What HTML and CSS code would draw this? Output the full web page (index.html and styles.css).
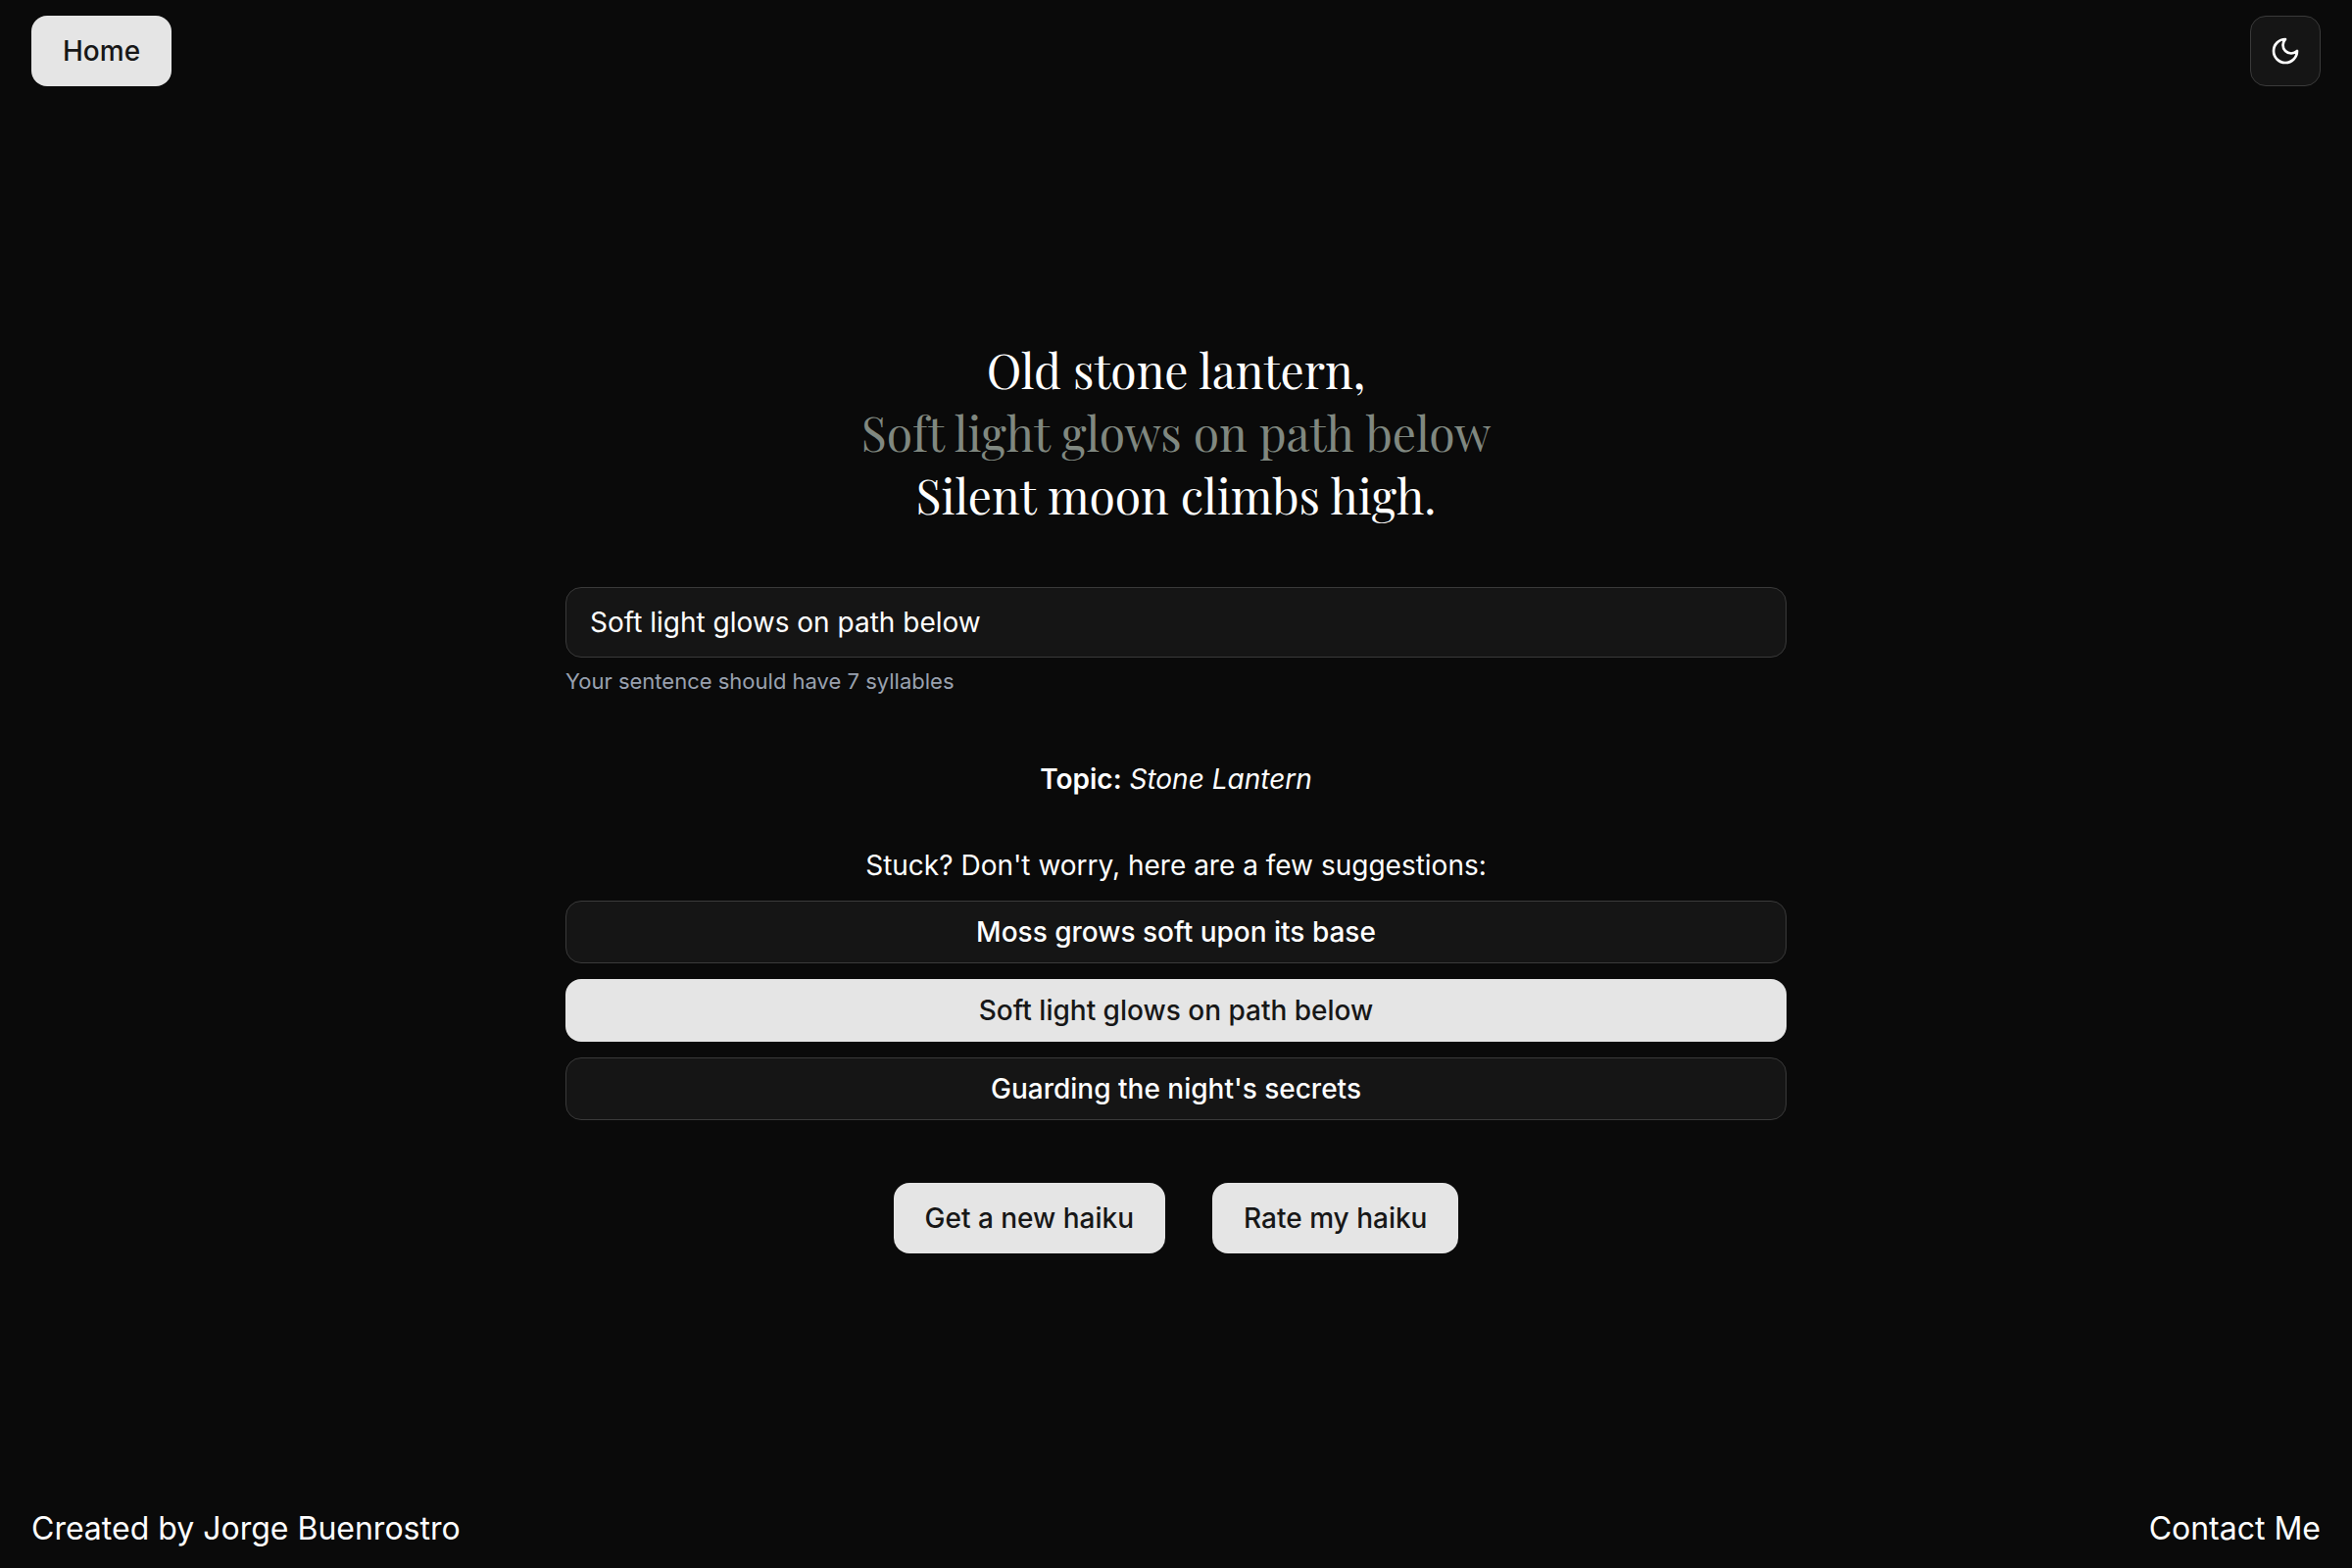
FILE: index.html
```html
<!DOCTYPE html>
<html lang="en">
<head>
  <meta charset="utf-8">
  <meta name="viewport" content="width=device-width, initial-scale=1">
  <title>Haiku</title>
  <link rel="stylesheet" href="styles.css">
</head>
<body>
  <header class="topbar">
    <a class="button" href="/">Home</a>
    <button class="button button-outline button-icon" type="button" aria-label="Toggle theme">
      <svg class="icon" viewBox="0 0 24 24" fill="none" stroke="currentColor" stroke-width="2" stroke-linecap="round" stroke-linejoin="round" aria-hidden="true">
        <path d="M12 3a6 6 0 0 0 9 9 9 9 0 1 1-9-9Z"/>
      </svg>
    </button>
  </header>

  <main class="content">
    <div class="haiku">
      <p>Old stone lantern,</p>
      <p class="haiku-own">Soft light glows on path below</p>
      <p>Silent moon climbs high.</p>
    </div>

    <div class="field">
      <input class="input" id="line" type="text" value="Soft light glows on path below">
      <label class="hint" for="line">Your sentence should have 7 syllables</label>
    </div>

    <p class="topic"><strong>Topic:</strong> <em>Stone Lantern</em></p>

    <section class="suggestions">
      <p>Stuck? Don't worry, here are a few suggestions:</p>
      <div class="suggestion-list">
        <button class="button button-slim button-outline" type="button">Moss grows soft upon its base</button>
        <button class="button button-slim" type="button">Soft light glows on path below</button>
        <button class="button button-slim button-outline" type="button">Guarding the night's secrets</button>
      </div>
    </section>

    <div class="actions">
      <button class="button" type="button">Get a new haiku</button>
      <button class="button" type="button">Rate my haiku</button>
    </div>
  </main>

  <footer class="footer">
    <p>Created by Jorge Buenrostro</p>
    <a class="footer-link" href="/contact">Contact Me</a>
  </footer>
</body>
</html>
```
FILE: styles.css
```css
*,
*::before,
*::after {
  box-sizing: border-box;
}

body {
  display: flex;
  flex-direction: column;
  min-height: 100vh;
  margin: 0;
  background: #0a0a0a;
  color: #fff;
  font-family: Inter, "Liberation Sans", sans-serif;
  font-size: 28px;
  line-height: 40px;
}

p {
  margin: 0;
}

.topbar {
  display: flex;
  align-items: center;
  justify-content: space-between;
  padding: 16px 32px;
}

.button {
  display: inline-flex;
  align-items: center;
  justify-content: center;
  height: 72px;
  padding: 0 32px;
  border: 0;
  border-radius: 16px;
  background: #e5e5e5;
  color: #171717;
  font: inherit;
  font-weight: 500;
  text-decoration: none;
  cursor: pointer;
}

.button-outline {
  border: 1px solid #3a3a3a;
  background: #151515;
  color: #fff;
}

.button-icon {
  width: 72px;
  padding: 0;
}

.button-slim {
  height: 64px;
}

.icon {
  width: 32px;
  height: 32px;
}

.content {
  display: flex;
  flex: 1;
  flex-direction: column;
  justify-content: center;
  width: 100%;
  max-width: 1246px;
  margin: 0 auto;
  text-align: center;
}

.haiku {
  margin-bottom: 62px;
  font-family: "Playfair Display", "Liberation Serif", serif;
  font-size: 48px;
  line-height: 64px;
}

.haiku-own {
  color: #808880;
}

.field {
  display: flex;
  flex-direction: column;
  gap: 8px;
  margin-bottom: 64px;
  text-align: left;
}

.input {
  width: 100%;
  height: 72px;
  padding: 0 24px;
  border: 1px solid #3a3a3a;
  border-radius: 16px;
  background: #151515;
  color: inherit;
  font: inherit;
}

.hint {
  color: #99a1af;
  font-size: 22px;
  line-height: 32px;
}

.topic {
  margin-bottom: 48px;
}

.topic strong {
  font-weight: 600;
}

.suggestions {
  display: flex;
  flex-direction: column;
  gap: 16px;
  margin-bottom: 64px;
}

.suggestion-list {
  display: flex;
  flex-direction: column;
  gap: 16px;
}

.actions {
  display: flex;
  justify-content: center;
  gap: 48px;
}

.footer {
  display: flex;
  align-items: center;
  justify-content: space-between;
  padding: 16px 32px;
  font-size: 32px;
  line-height: 48px;
}

.footer-link {
  color: inherit;
  text-decoration: none;
}
```
